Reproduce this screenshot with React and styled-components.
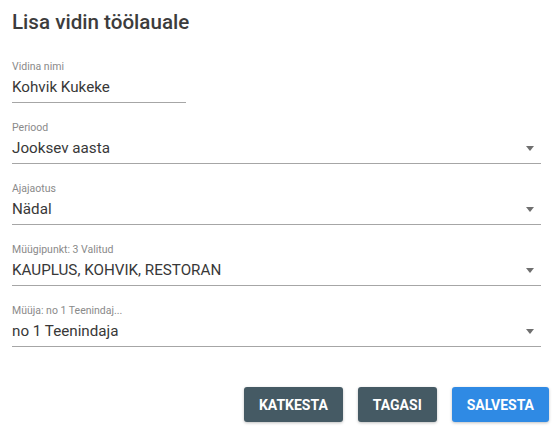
import React from "react";
import styled, { createGlobalStyle } from "styled-components";

const Global = createGlobalStyle`
  html, body { margin: 0; padding: 0; background: #ffffff; }
  body { font-family: Roboto, "Liberation Sans", Arial, sans-serif; }
`;

const Dialog = styled.div`
  width: 560px;
  height: 433px;
  box-sizing: border-box;
  padding: 10px 11px 0 12px;
  display: flex;
  flex-direction: column;
`;

const Title = styled.h2`
  margin: 0;
  font-size: 20.6px;
  line-height: 24px;
  font-weight: 500;
  color: #3c3c3c;
`;

const Form = styled.div`
  margin-top: 26px;
  display: flex;
  flex-direction: column;
  gap: 18px;
  padding-right: 8px;
`;

const Field = styled.div`
  display: flex;
  flex-direction: column;
  gap: 3px;
  width: ${(p) => (p.$narrow ? "174px" : "100%")};
  border-bottom: 1px solid #a6a6a6;
  padding-bottom: 5px;
`;

const Label = styled.div`
  font-size: 10.5px;
  line-height: 14px;
  color: #8a8a8a;
  white-space: nowrap;
`;

const ValueRow = styled.div`
  display: flex;
  align-items: center;
  justify-content: space-between;
  height: 20px;
`;

const Value = styled.div`
  font-size: 15.2px;
  line-height: 20px;
  color: #383838;
`;

const Arrow = styled.span`
  width: 0;
  height: 0;
  border-left: 4.5px solid transparent;
  border-right: 4.5px solid transparent;
  border-top: 5px solid #6f6f6f;
  margin-right: 7px;
`;

const Actions = styled.div`
  margin-top: 40px;
  display: flex;
  justify-content: flex-end;
  gap: 15px;
`;

const Button = styled.button`
  height: 35px;
  padding: 0 15px;
  border: none;
  border-radius: 3px;
  font-family: Roboto, "Liberation Sans", Arial, sans-serif;
  font-size: 14px;
  font-weight: 700;
  color: #ffffff;
  background: ${(p) => (p.$primary ? "#2f8ae4" : "#455a64")};
  box-shadow: 0 1px 3px rgba(0, 0, 0, 0.25);
  cursor: pointer;
`;

function Select({ label, value }) {
  return (
    <Field>
      <Label>{label}</Label>
      <ValueRow>
        <Value>{value}</Value>
        <Arrow />
      </ValueRow>
    </Field>
  );
}

export default function App() {
  return (
    <>
      <Global />
      <Dialog>
        <Title>Lisa vidin töölauale</Title>
        <Form>
          <Field $narrow>
            <Label>Vidina nimi</Label>
            <ValueRow>
              <Value>Kohvik Kukeke</Value>
            </ValueRow>
          </Field>
          <Select label="Periood" value="Jooksev aasta" />
          <Select label="Ajajaotus" value="Nädal" />
          <Select label="Müügipunkt: 3 Valitud" value="KAUPLUS, KOHVIK, RESTORAN" />
          <Select label="Müüja: no 1 Teenindaj..." value="no 1 Teenindaja" />
        </Form>
        <Actions>
          <Button>KATKESTA</Button>
          <Button>TAGASI</Button>
          <Button $primary>SALVESTA</Button>
        </Actions>
      </Dialog>
    </>
  );
}
